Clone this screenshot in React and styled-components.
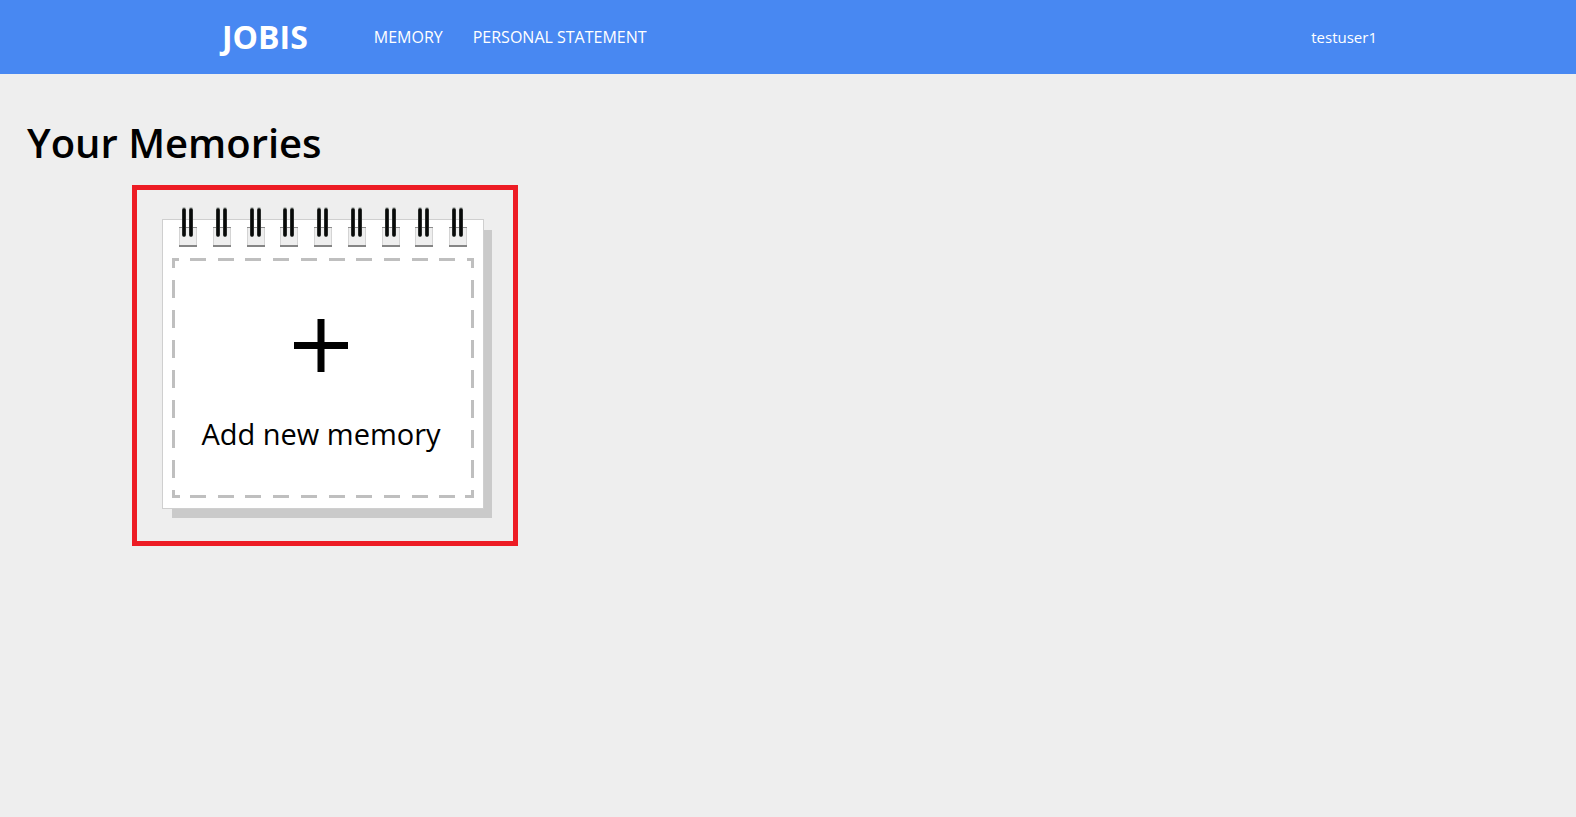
import React from "react";
import styled, { createGlobalStyle } from "styled-components";

const GlobalStyle = createGlobalStyle`
  *, *::before, *::after { box-sizing: border-box; }
  body {
    margin: 0;
    background: #eeeeee;
    color: #000;
    font-family: "Open Sans", "Noto Sans", "Noto Sans CJK KR", sans-serif;
  }
`;

const Header = styled.header`
  display: flex;
  align-items: center;
  height: 74px;
  padding: 0 199px 0 222px;
  background: #4888f2;
`;

const Logo = styled.a`
  margin-right: 66px;
  color: #fff;
  font-size: 32px;
  line-height: 40px;
  font-weight: 700;
  text-decoration: none;
`;

const Nav = styled.nav`
  display: flex;
  flex: 1;
  gap: 30px;
`;

const HeaderLink = styled.a`
  color: #fff;
  font-size: ${(p) => (p.$compact ? 15 : 16)}px;
  line-height: 24px;
  text-decoration: none;
`;

const Main = styled.main`
  padding: 39px 27px;
`;

const Title = styled.h1`
  margin: 0;
  font-size: 40px;
  line-height: 60px;
  font-weight: 600;
`;

const MemoryList = styled.ul`
  display: flex;
  flex-wrap: wrap;
  margin: 12px 0 0;
  padding: 0 0 0 105px;
  list-style: none;
`;

const MemoryItem = styled.li`
  padding: 29px 29px 32px 25px;
  border: 5px solid #ed1c24;
`;

const Notepad = styled.button`
  position: relative;
  display: flex;
  flex-direction: column;
  align-items: center;
  width: 322px;
  height: 290px;
  padding: 99px 4px 0 0;
  border: 1px solid #cfcfcf;
  background: #fff;
  box-shadow: 9px 10px 0 -1px #cacaca;
  color: #000;
  font-family: inherit;
  cursor: pointer;
`;

const Rings = styled.svg`
  position: absolute;
  top: -13px;
  left: 16px;
`;

const Stitching = styled.svg`
  position: absolute;
  top: 38px;
  left: 8px;
`;

const NotepadLabel = styled.span`
  margin-top: 41px;
  font-size: 29px;
  line-height: 40px;
  font-weight: 400;
`;

const ringOffsets = [0, 34, 68, 101, 135, 169, 203, 236, 270];
const columns = Array.from({ length: 10 }, (_, i) => 19 + Math.round(i * 27.7));
const rows = Array.from({ length: 7 }, (_, i) => 22 + i * 30);

function Ring({ x }) {
  return (
    <g transform={`translate(${x} 0)`}>
      <path d="M0 20h18v20H0z" fill="#eeeeee" />
      <path d="M.5 20v19M17.5 20v19" stroke="#d4d4d4" />
      <path d="M0 20.5h18" stroke="#8c8c8c" />
      <path d="M0 39h18" stroke="#858585" strokeWidth="2" />
      {[5, 12].map((rod) => (
        <g key={rod} strokeLinecap="round">
          <path d={`M${rod} 2v26`} stroke="#b3b8b5" strokeWidth="4" />
          <path d={`M${rod} 3v25`} stroke="#080a09" strokeWidth="3.6" />
        </g>
      ))}
    </g>
  );
}

function SpiralRings() {
  return (
    <Rings width="288" height="41" aria-hidden="true">
      {ringOffsets.map((x) => (
        <Ring key={x} x={x} />
      ))}
    </Rings>
  );
}

function StitchedFrame() {
  return (
    <Stitching width="304" height="240" fill="#bfbfbf" aria-hidden="true">
      <path d="M1 0h7v3H4v7H1zM296 0h7v10h-3V3h-4zM1 232h3v5h5v3H1zM300 232h3v8h-9v-3h6z" />
      {columns.map((x) => (
        <path key={x} d={`M${x} 0h16v3h-16zM${x} 237h16v3h-16z`} />
      ))}
      {rows.map((y) => (
        <path key={y} d={`M1 ${y}h3v18h-3zM300 ${y}h3v18h-3z`} />
      ))}
    </Stitching>
  );
}

export default function App() {
  return (
    <>
      <GlobalStyle />
      <Header>
        <Logo href="#home">JOBIS</Logo>
        <Nav>
          <HeaderLink href="#memory">MEMORY</HeaderLink>
          <HeaderLink href="#statement">PERSONAL STATEMENT</HeaderLink>
        </Nav>
        <HeaderLink href="#account" $compact>testuser1</HeaderLink>
      </Header>
      <Main>
        <Title>Your Memories</Title>
        <MemoryList>
          <MemoryItem>
            <Notepad type="button">
              <SpiralRings />
              <StitchedFrame />
              <svg width="54" height="54" aria-hidden="true">
                <path d="M0 26.5h54M27 0v53" stroke="#000" strokeWidth="7" />
              </svg>
              <NotepadLabel>Add new memory</NotepadLabel>
            </Notepad>
          </MemoryItem>
        </MemoryList>
      </Main>
    </>
  );
}
